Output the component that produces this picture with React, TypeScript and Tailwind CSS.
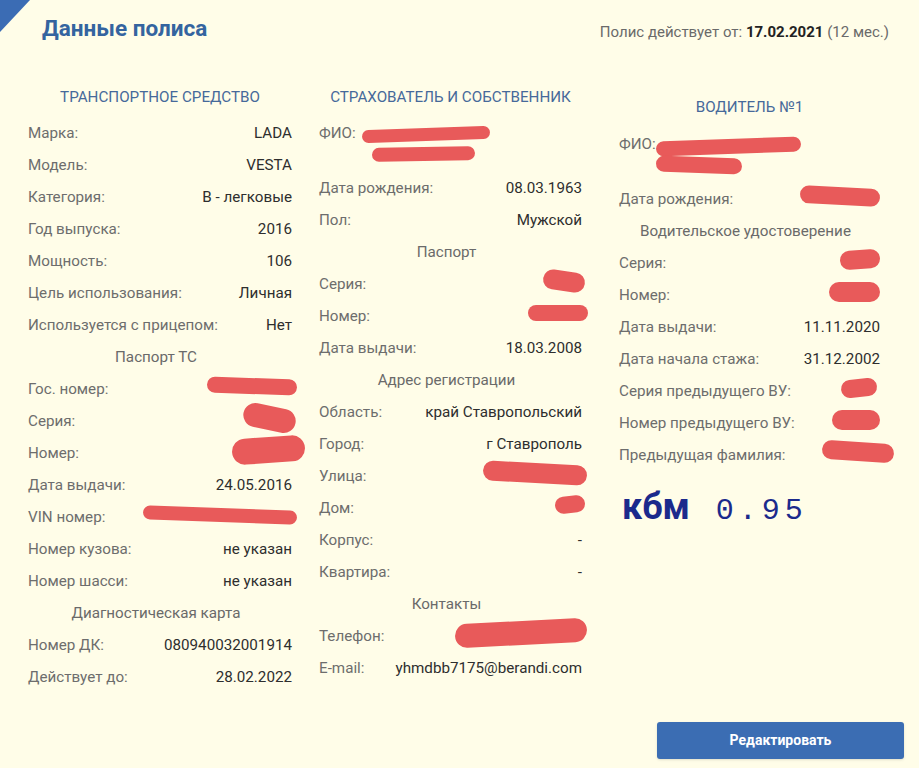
import React from "react";

const Blob = ({ className }: { className: string }) => (
  <span className={"inline-block rounded-full bg-[#e85a5a] " + className} />
);

const Row = ({ label, children }: { label: string; children?: React.ReactNode }) => (
  <div className="flex h-8 items-center justify-between">
    <span className="text-[#6d6d6d]">{label}</span>
    <span className="text-[#2e2e2e]">{children}</span>
  </div>
);

const Sub = ({ text }: { text: string }) => (
  <div className="flex h-8 items-center justify-center pr-2 text-[#6a6a6a]">{text}</div>
);

const Head = ({ text, className = "" }: { text: string; className?: string }) => (
  <div className={"mb-[4px] flex h-8 items-center justify-center uppercase text-[#46699a] " + className}>{text}</div>
);

export default function App() {
  return (
    <div
      className="relative flex h-[768px] w-[919px] flex-col overflow-hidden bg-[#fffde8] text-[15.2px]"
      style={{ fontFamily: "Roboto, 'Noto Sans', sans-serif" }}
    >
      <svg className="absolute left-0 top-0" width="32" height="34" viewBox="0 0 32 34">
        <polygon points="0,0 30,0 0,32" fill="#3b6cb4" />
      </svg>

      <div className="flex h-[81px] items-start justify-between pl-[42px] pr-[30px] pt-[14px]">
        <h1 className="text-[22.5px] font-bold leading-[28px] text-[#34649f]">Данные полиса</h1>
        <div className="mt-[8px] text-[15px] leading-5 text-[#6a6a6a]">
          Полис действует от: <span className="font-bold text-[#222]">17.02.2021</span> (12 мес.)
        </div>
      </div>

      <div className="flex pl-[28px]">
        {/* Column 1 */}
        <div className="flex w-[264px] flex-col">
          <Head text="Транспортное средство" />
          <Row label="Марка:">LADA</Row>
          <Row label="Модель:">VESTA</Row>
          <Row label="Категория:">B - легковые</Row>
          <Row label="Год выпуска:">2016</Row>
          <Row label="Мощность:">106</Row>
          <Row label="Цель использования:">Личная</Row>
          <Row label="Используется с прицепом:">Нет</Row>
          <Sub text="Паспорт ТС" />
          <Row label="Гос. номер:">
            <Blob className="mr-[-5px] block h-[16px] w-[90px] rotate-[2deg]" />
          </Row>
          <Row label="Серия:">
            <Blob className="mr-[-4px] block h-[24px] w-[53px] rotate-[12deg]" />
          </Row>
          <Row label="Номер:">
            <Blob className="mr-[-13px] block h-[26px] w-[73px] rotate-[-4deg]" />
          </Row>
          <Row label="Дата выдачи:">24.05.2016</Row>
          <Row label="VIN номер:">
            <Blob className="mr-[-5px] block h-[14px] w-[154px] rotate-[2deg]" />
          </Row>
          <Row label="Номер кузова:">не указан</Row>
          <Row label="Номер шасси:">не указан</Row>
          <Sub text="Диагностическая карта" />
          <Row label="Номер ДК:">080940032001914</Row>
          <Row label="Действует до:">28.02.2022</Row>
        </div>

        {/* Column 2 */}
        <div className="ml-[27px] flex w-[263px] flex-col">
          <Head text="Страхователь и собственник" />
          <div className="flex h-[55px] items-start pt-[6px]">
            <span className="leading-5 text-[#6d6d6d]">ФИО:</span>
            <span className="ml-[6px] flex flex-col gap-[6px] pt-[5px]">
              <Blob className="block h-[13px] w-[128px] rotate-[-2deg]" />
              <Blob className="ml-[10px] block h-[14px] w-[103px] rotate-[-1deg]" />
            </span>
          </div>
          <Row label="Дата рождения:">08.03.1963</Row>
          <Row label="Пол:">Мужской</Row>
          <Sub text="Паспорт" />
          <Row label="Серия:">
            <Blob className="mr-[-3px] block h-[20px] w-[42px] rotate-[8deg]" />
          </Row>
          <Row label="Номер:">
            <Blob className="mr-[-6px] block h-[16px] w-[60px]" />
          </Row>
          <Row label="Дата выдачи:">18.03.2008</Row>
          <Sub text="Адрес регистрации" />
          <Row label="Область:">край Ставропольский</Row>
          <Row label="Город:">г Ставрополь</Row>
          <Row label="Улица:">
            <Blob className="mr-[-5px] block h-[20px] w-[104px] rotate-[3deg]" />
          </Row>
          <Row label="Дом:">
            <Blob className="mr-[-3px] block h-[17px] w-[30px] rotate-[-6deg]" />
          </Row>
          <Row label="Корпус:">-</Row>
          <Row label="Квартира:">-</Row>
          <Sub text="Контакты" />
          <Row label="Телефон:">
            <Blob className="mr-[-5px] block h-[24px] w-[132px] rotate-[-3deg]" />
          </Row>
          <Row label="E-mail:">yhmdbb7175@berandi.com</Row>
        </div>

        {/* Column 3 */}
        <div className="ml-[37px] flex w-[261px] flex-col">
          <Head text="Водитель №1" className="mt-[10px]" />
          <div className="flex h-[56px] items-start pt-[6px]">
            <span className="leading-[23px] text-[#6d6d6d]">ФИО:</span>
            <span className="flex flex-col gap-[3px] pt-[6px]">
              <Blob className="block h-[15px] w-[145px] rotate-[-2deg]" />
              <Blob className="block h-[16px] w-[86px] rotate-[2deg]" />
            </span>
          </div>
          <Row label="Дата рождения:">
            <Blob className="block h-[18px] w-[80px] rotate-[3deg]" />
          </Row>
          <Sub text="Водительское удостоверение" />
          <Row label="Серия:">
            <Blob className="block h-[19px] w-[40px] rotate-[-4deg]" />
          </Row>
          <Row label="Номер:">
            <Blob className="block h-[20px] w-[51px]" />
          </Row>
          <Row label="Дата выдачи:">11.11.2020</Row>
          <Row label="Дата начала стажа:">31.12.2002</Row>
          <Row label="Серия предыдущего ВУ:">
            <Blob className="mr-[3px] block h-[18px] w-[36px] rotate-[-6deg]" />
          </Row>
          <Row label="Номер предыдущего ВУ:">
            <Blob className="block h-[20px] w-[48px]" />
          </Row>
          <Row label="Предыдущая фамилия:">
            <Blob className="mr-[-14px] block h-[19px] w-[72px] rotate-[4deg]" />
          </Row>
          <div className="mt-[16px] flex items-baseline pl-[3px] text-[#1b2a8c]">
            <span className="text-[36px] font-bold leading-10">кбм</span>
            <span
              className="ml-[26px] text-[30px] leading-10 tracking-[5px]"
              style={{ fontFamily: "'Liberation Mono', monospace" }}
            >
              0.95
            </span>
          </div>
        </div>
      </div>

      <div className="mt-auto flex justify-end pb-[9px] pr-[15px]">
        <button className="h-[37px] w-[247px] rounded-[3px] bg-[#3b6db3] text-[14px] font-bold text-white shadow-sm">
          Редактировать
        </button>
      </div>
    </div>
  );
}
